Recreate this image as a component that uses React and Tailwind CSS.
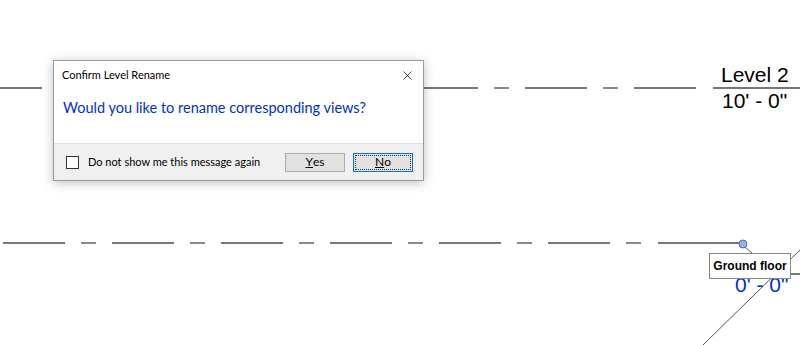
import { X } from 'lucide-react';

const ui = { fontFamily: 'Lato, "Noto Sans", sans-serif' };
const cad = { fontFamily: '"Liberation Sans", Arial, sans-serif' };

// dash pattern of a Revit level line: long 62, gap 16, short 15, gap 16
function levelDashes(y, from, to, offset) {
    const segs = [];
    for (let x = offset; x < to; x += 109) {
        segs.push([x, x + 62]);
        segs.push([x + 78, x + 93]);
    }
    return segs
        .map(([a, b]) => [Math.max(a, from), Math.min(b, to)])
        .filter(([a, b]) => b > a)
        .map(([a, b], i) => (
            <line key={`${y}-${i}`} x1={a} y1={y} x2={b} y2={y} stroke="#4a4a4a" strokeWidth="1.3" />
        ));
}

function Button({ children, focused }) {
    return (
        <button
            className={`h-[19px] w-[60px] bg-[#e1e1e1] text-[12px] text-black ${
                focused ? 'border border-[#0078d7] p-[1px]' : 'border border-[#adadad]'
            }`}
            style={ui}
        >
            <span
                className={`flex h-full w-full items-center justify-center leading-none ${
                    focused ? 'border border-dotted border-[#333]' : ''
                }`}
            >
                {children}
            </span>
        </button>
    );
}

export default function App() {
    return (
        <div className="relative h-[345px] w-[800px] overflow-hidden bg-white">
            {/* Drawing canvas */}
            <svg className="absolute inset-0" width="800" height="345">
                <line x1="0" y1="88" x2="42" y2="88" stroke="#4a4a4a" strokeWidth="1.3" />
                {levelDashes(88, 423, 697, 416)}
                <line x1="713" y1="88" x2="800" y2="88" stroke="#4a4a4a" strokeWidth="1.3" />

                {levelDashes(243, 3, 645, 3)}
                <line x1="658" y1="243" x2="739" y2="243" stroke="#4a4a4a" strokeWidth="1.3" />
                <line x1="745" y1="247" x2="752" y2="253" stroke="#555" strokeWidth="1" />
                <line x1="703" y1="345" x2="800" y2="250" stroke="#555" strokeWidth="1" />
                <line x1="790" y1="274" x2="800" y2="274" stroke="#777" strokeWidth="2" />
                <circle cx="743" cy="244" r="4" fill="#8db4ea" stroke="#5a6f90" strokeWidth="1" />
            </svg>

            {/* Level 2 head */}
            <div className="absolute left-[721px] top-[63px] text-[21px] leading-[24px] text-black" style={cad}>
                Level 2
            </div>
            <div className="absolute left-[722px] top-[89px] text-[21px] leading-[24px] text-black" style={cad}>
                10' - 0"
            </div>

            {/* Ground floor head */}
            <div
                className="absolute left-[735px] top-[273px] text-[21px] leading-[24px] text-[#0033cc]"
                style={cad}
            >
                0' - 0"
            </div>
            <div
                className="absolute left-[709px] top-[253px] flex h-[26px] w-[82px] items-center justify-center border border-[#888] bg-white text-[12px] font-bold text-black"
                style={cad}
            >
                Ground floor
            </div>

            {/* Dialog */}
            <div
                className="absolute left-[53px] top-[60px] flex h-[121px] w-[371px] flex-col border border-[#9a9a9a] bg-white shadow-[0_2px_10px_rgba(0,0,0,0.25)]"
                style={ui}
            >
                <div className="flex h-[28px] items-center justify-between pl-[8px] pr-[8px]">
                    <span className="text-[11px] text-black">Confirm Level Rename</span>
                    <X size={15} strokeWidth={1.2} className="text-black" />
                </div>
                <div className="h-[54px] pl-[9px] pt-[9px] text-[14.5px] leading-[20px] text-[#0033bc]">
                    Would you like to rename corresponding views?
                </div>
                <div className="flex flex-1 items-center border-t border-[#dfdfdf] bg-[#f0f0f0] pl-[12px] pr-[10px]">
                    <span className="h-[13px] w-[13px] shrink-0 border border-[#333] bg-white" />
                    <span className="ml-[9px] whitespace-nowrap text-[11px] text-black">
                        Do not show me this message again
                    </span>
                    <div className="ml-auto flex gap-[8px]">
                        <Button>
                            <span className="underline">Y</span>es
                        </Button>
                        <Button focused>
                            <span className="underline">N</span>o
                        </Button>
                    </div>
                </div>
            </div>
        </div>
    );
}
